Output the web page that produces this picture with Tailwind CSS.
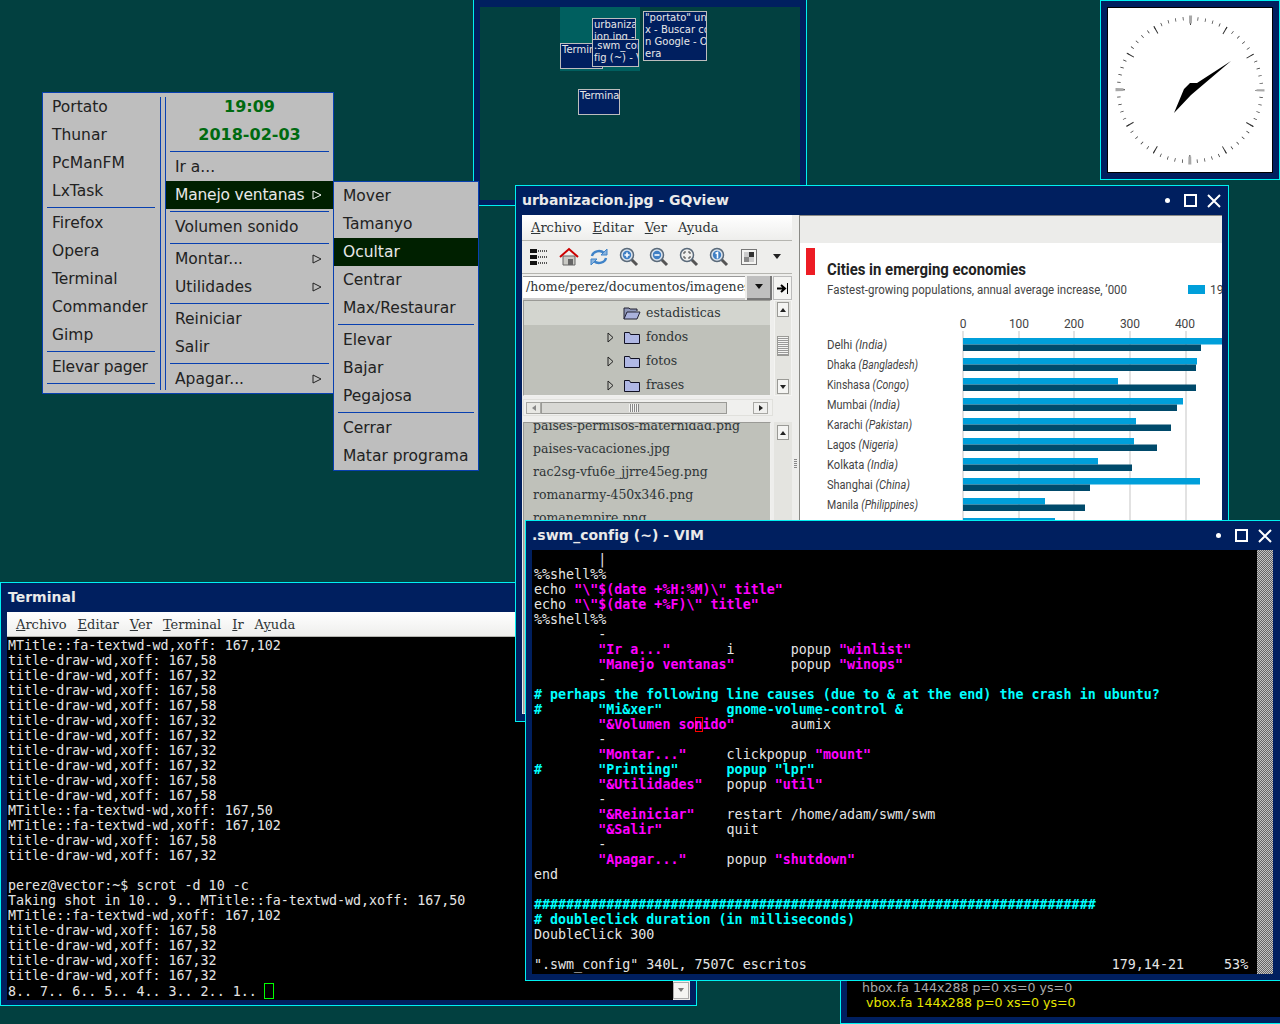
<!DOCTYPE html>
<html lang="es">
<head>
<meta charset="UTF-8">
<title>swm desktop</title>
<script src="https://cdn.jsdelivr.net/npm/@tailwindcss/browser@4"></script>
</head>
<body class="bg-[#024040]">
<div class="relative w-[1280px] h-[1024px] overflow-hidden font-['DejaVu_Sans',sans-serif]">

  <!-- pager -->
  <div class="absolute left-[473px] top-0 w-[334px] h-[206px] border-x border-b border-[#00f0f0] bg-[#001f5f] px-[6px] pt-[7px] pb-[5px]">
    <div class="relative w-full h-full bg-[#024040] text-[10px] leading-[12px] text-[#e8e8e8] whitespace-pre">
      <div class="absolute left-[80px] top-0 w-[80px] h-[64px] bg-[#005f5f]"></div>
      <div class="absolute left-[80px] top-[36px] w-[43px] h-[26px] border border-[#bdbdbd] bg-[#001f5f] overflow-hidden px-[1px]">Terminal</div>
      <div class="absolute left-[112px] top-[11px] w-[44px] h-[30px] border border-[#bdbdbd] bg-[#001f5f] overflow-hidden px-[1px]">urbanizac
ion.jpg -</div>
      <div class="absolute left-[112px] top-[32px] w-[47px] h-[28px] border border-[#bdbdbd] bg-[#001f5f] overflow-hidden px-[1px]">.swm_conf
fig (~) - VIM</div>
      <div class="absolute left-[163px] top-[4px] w-[64px] h-[50px] border border-[#bdbdbd] bg-[#001f5f] overflow-hidden px-[1px]">"portato" un
x - Buscar co
n Google - O
era</div>
      <div class="absolute left-[98px] top-[82px] w-[42px] h-[26px] border border-[#bdbdbd] bg-[#001f5f] overflow-hidden px-[1px]">Terminal</div>
    </div>
  </div>

  <!-- clock -->
  <div class="absolute left-[1100px] top-0 w-[180px] h-[180px] border border-[#00f0f0] bg-[#001f5f] p-[6px]">
    <div class="w-[166px] h-[166px] border border-black bg-white">
      <svg width="164" height="164" viewBox="1108 8 164 164">
        <g fill="none">
          <circle cx="1190" cy="90" r="71.5" stroke="#333" stroke-width="3.5" stroke-dasharray="0.7 6.787" stroke-dashoffset="0.35"/>
          <circle cx="1190" cy="90" r="69" stroke="#333" stroke-width="8" stroke-dasharray="1 35.128" stroke-dashoffset="0.5"/>
          <circle cx="1190" cy="90" r="70.5" stroke="#a8a8a8" stroke-width="8" stroke-dasharray="3 107.74" stroke-dashoffset="1.5"/>
        </g>
        <path d="M1231 61 L1197 83 L1190 83 L1184 89 L1174 113 L1191 95 Z" fill="#000"/>
      </svg>
    </div>
  </div>

  <!-- bottom right window -->
  <div class="absolute left-[840px] top-[960px] w-[460px] h-[64px] border border-[#00f0f0] bg-[#001f5f] pl-[6px] pb-[6px]">
    <div class="w-full h-full bg-black flex flex-col justify-end pb-[7px] pl-[15px] text-[12.6px] leading-[15px] whitespace-pre">
      <div class="text-[#a9a9a9]">hbox.fa 144x288 p=0 xs=0 ys=0</div>
      <div class="text-[#e6e600] pl-[4px]">vbox.fa 144x288 p=0 xs=0 ys=0</div>
    </div>
  </div>

  <!-- terminal -->
  <div class="absolute left-0 top-[582px] w-[697px] h-[424px] border border-[#00f0f0] bg-[#001f5f] px-[6px] pb-[5px] flex flex-col">
    <div class="h-[29px] flex items-center pl-[1px] text-[#eaeaea] text-[14px] font-bold shrink-0">Terminal</div>
    <div class="h-[25px] shrink-0 bg-gradient-to-b from-white to-[#eeeeec] border-b border-[#b5b5b0] flex items-center pl-[9px] pt-[1px] gap-[11px] text-[13px] text-[#2e3436] font-['DejaVu_Serif',serif]">
      <span><u>A</u>rchivo</span><span><u>E</u>ditar</span><span><u>V</u>er</span><span><u>T</u>erminal</span><span><u>I</u>r</span><span>A<u>y</u>uda</span>
    </div>
    <div class="flex-1 min-h-0 bg-black flex">
      <pre class="flex-1 pl-[1px] pt-[1px] font-['DejaVu_Sans_Mono',monospace] text-[13.33px] leading-[15px] text-[#e5e5e5] overflow-hidden">MTitle::fa-textwd-wd,xoff: 167,102
title-draw-wd,xoff: 167,58
title-draw-wd,xoff: 167,32
title-draw-wd,xoff: 167,58
title-draw-wd,xoff: 167,58
title-draw-wd,xoff: 167,32
title-draw-wd,xoff: 167,32
title-draw-wd,xoff: 167,32
title-draw-wd,xoff: 167,32
title-draw-wd,xoff: 167,58
title-draw-wd,xoff: 167,58
MTitle::fa-textwd-wd,xoff: 167,50
MTitle::fa-textwd-wd,xoff: 167,102
title-draw-wd,xoff: 167,58
title-draw-wd,xoff: 167,32

perez@vector:~$ scrot -d 10 -c
Taking shot in 10.. 9.. MTitle::fa-textwd-wd,xoff: 167,50
MTitle::fa-textwd-wd,xoff: 167,102
title-draw-wd,xoff: 167,58
title-draw-wd,xoff: 167,32
title-draw-wd,xoff: 167,32
title-draw-wd,xoff: 167,32
8.. 7.. 6.. 5.. 4.. 3.. 2.. 1.. <span class="inline-block w-[10px] h-[16px] -ml-[1px] align-[-3px] border border-[#00ff00]"></span></pre>
      <div class="w-[17px] bg-[#eeeeec] flex flex-col justify-end pb-[1px] pr-[1px]">
        <div class="h-[17px] border border-[#aaa] bg-[#f4f4f2] flex items-center justify-center"><svg width="6" height="5"><path d="M0 0H6L3 4Z" fill="#777"/></svg></div>
      </div>
    </div>
  </div>

  <!-- gqview -->
  <div class="absolute left-[515px] top-[185px] w-[714px] h-[537px] border border-[#00f0f0] bg-[#001f5f] px-[6px] pb-[7px] flex flex-col">
    <div class="h-[29px] shrink-0 flex items-center justify-between text-[#eaeaea]">
      <span class="text-[14px] font-bold">urbanizacion.jpg - GQview</span>
      <div class="flex items-center">
        <div class="w-[5px] h-[5px] rounded-full bg-white mr-[14px]"></div>
        <div class="w-[13px] h-[13px] border-2 border-white mr-[10px]"></div>
        <svg class="mr-[1px]" width="14" height="14"><path d="M1 1L13 13M13 1L1 13" stroke="#fff" stroke-width="2"/></svg>
      </div>
    </div>
    <div class="flex-1 min-h-0 bg-[#eeeeec] flex">
      <!-- left pane -->
      <div class="w-[270px] shrink-0 flex flex-col text-[#2e3436] font-['DejaVu_Serif',serif] text-[12.5px]">
        <div class="h-[26px] shrink-0 bg-gradient-to-b from-white to-[#eeeeec] border-b border-[#b5b5b0] flex items-center pl-[9px] gap-[11px] text-[13px]">
          <span><u>A</u>rchivo</span><span><u>E</u>ditar</span><span><u>V</u>er</span><span>A<u>y</u>uda</span>
        </div>
        <div class="h-[33px] shrink-0 border-b border-[#b5b5b0] flex items-center pl-[2px]">
          <div class="w-[30px] flex justify-center"><svg width="20" height="20" viewBox="0 0 20 20"><path d="M1 2h7v4H1zM1 8h7v4H1zM1 14h7v4H1z" fill="#111"/><path d="M9 4h9M9 10h9M9 16h9" stroke="#555" stroke-dasharray="1 1" stroke-width="2" /></svg></div>
          <div class="w-[30px] flex justify-center"><svg width="20" height="20" viewBox="0 0 20 20"><path d="M4 9h12v9H4z" fill="#c9c9c4" stroke="#666"/><path d="M9 12h5v6H9z" fill="#666"/><path d="M1 10L10 2L19 10" fill="none" stroke="#cc0000" stroke-width="2"/></svg></div>
          <div class="w-[30px] flex justify-center"><svg width="20" height="20" viewBox="0 0 20 20" fill="none" stroke="#3f83c8" stroke-width="2.4"><path d="M3 9a7 6 0 0 1 12-3"/><path d="M17 11a7 6 0 0 1-12 3"/><path d="M18 2v6h-6z M2 18v-6h6z" fill="#8ab4de" stroke-width="1"/></svg></div>
          <div class="w-[30px] flex justify-center"><svg width="20" height="20" viewBox="0 0 20 20"><path d="M12 12l6 6" stroke="#555" stroke-width="3"/><circle cx="8" cy="8" r="6.5" fill="#dbe4ee" stroke="#5a6a7a" stroke-width="1.5"/><circle cx="8" cy="8" r="4.2" fill="#3f7fc4"/><path d="M5.5 8h5M8 5.5v5" stroke="#fff" stroke-width="1.6"/></svg></div>
          <div class="w-[30px] flex justify-center"><svg width="20" height="20" viewBox="0 0 20 20"><path d="M12 12l6 6" stroke="#555" stroke-width="3"/><circle cx="8" cy="8" r="6.5" fill="#dbe4ee" stroke="#5a6a7a" stroke-width="1.5"/><circle cx="8" cy="8" r="4.2" fill="#3f7fc4"/><path d="M5.5 8h5" stroke="#fff" stroke-width="1.6"/></svg></div>
          <div class="w-[30px] flex justify-center"><svg width="20" height="20" viewBox="0 0 20 20"><path d="M12 12l6 6" stroke="#555" stroke-width="3"/><circle cx="8" cy="8" r="6.5" fill="#f0f0ee" stroke="#5a6a7a" stroke-width="1.5"/><path d="M5 7V5h2M9 5h2v2M11 9v2H9M7 11H5V9" fill="none" stroke="#444"/></svg></div>
          <div class="w-[30px] flex justify-center"><svg width="20" height="20" viewBox="0 0 20 20"><path d="M12 12l6 6" stroke="#555" stroke-width="3"/><circle cx="8" cy="8" r="6.5" fill="#dbe4ee" stroke="#5a6a7a" stroke-width="1.5"/><circle cx="8" cy="8" r="4.2" fill="#3f7fc4"/><path d="M6.5 6.5L8.5 5.5v6" fill="none" stroke="#fff" stroke-width="1.6"/></svg></div>
          <div class="w-[30px] flex justify-center"><svg width="16" height="16" viewBox="0 0 16 16"><rect x="0.5" y="0.5" width="15" height="15" fill="#f4f4f2" stroke="#777"/><path d="M8 3h5v5H8z" fill="#333"/><path d="M3 8h5v5H3z" fill="#888"/><path d="M3 3h5v5H3zM8 8h5v5H8z" fill="#ccc"/></svg></div>
          <div class="w-[26px] flex justify-center"><svg width="10" height="6"><path d="M1 0H9L5 5Z" fill="#222"/></svg></div>
        </div>
        <!-- path entry -->
        <div class="h-[26px] shrink-0 flex pl-[1px] pt-[2px] gap-[2px]">
          <div class="w-[222px] bg-white border-t border-[#999] border-b-2 border-b-[#ccc] pl-[3px] overflow-hidden whitespace-pre leading-[19px]">/home/perez/documentos/imagenes/</div>
          <div class="w-[25px] bg-[#bfbfbf] border-r-2 border-b-2 border-[#777] flex items-center justify-center"><svg width="10" height="6"><path d="M1 0H9L5 5Z" fill="#111"/></svg></div>
          <div class="w-[19px] -ml-[1px] bg-[#f4f4f2] border border-[#bbb] flex items-center justify-center"><svg width="12" height="11"><path d="M0 5.5H7M4 2L8 5.5L4 9" fill="none" stroke="#000" stroke-width="2"/><path d="M10.5 0V11" stroke="#000"/></svg></div>
        </div>
        <!-- tree -->
        <div class="h-[96px] shrink-0 flex pl-[1px]">
          <div class="w-[248px] border border-[#f0f0ee] border-l-[#9a9a96] border-t-[#9a9a96] bg-[#bfc1ba] overflow-hidden">
            <div class="h-[24px] bg-[#d3d5cf] flex items-center pl-[99px] gap-[5px]">
              <svg width="18" height="14" viewBox="0 0 18 14"><path d="M1 13V2h5l1 1h7v2" fill="#8f97b8" stroke="#223"/><path d="M1 13L4 6H17L14 13Z" fill="#aab2dc" stroke="#223"/></svg><span>estadisticas</span>
            </div>
            <div class="h-[24px] flex items-center pl-[83px] gap-[10px]">
              <svg width="7" height="11"><path d="M1 1L6 5.5L1 10Z" fill="none" stroke="#222"/></svg>
              <svg width="16" height="13" viewBox="0 0 16 13"><path d="M.5 12.5V1.5h5l1 2h9v9z" fill="#b0b8e4" stroke="#112"/></svg><span class="-ml-[4px]">fondos</span>
            </div>
            <div class="h-[24px] flex items-center pl-[83px] gap-[10px]">
              <svg width="7" height="11"><path d="M1 1L6 5.5L1 10Z" fill="none" stroke="#222"/></svg>
              <svg width="16" height="13" viewBox="0 0 16 13"><path d="M.5 12.5V1.5h5l1 2h9v9z" fill="#b0b8e4" stroke="#112"/></svg><span class="-ml-[4px]">fotos</span>
            </div>
            <div class="h-[24px] flex items-center pl-[83px] gap-[10px]">
              <svg width="7" height="11"><path d="M1 1L6 5.5L1 10Z" fill="none" stroke="#222"/></svg>
              <svg width="16" height="13" viewBox="0 0 16 13"><path d="M.5 12.5V1.5h5l1 2h9v9z" fill="#b0b8e4" stroke="#112"/></svg><span class="-ml-[4px]">frases</span>
            </div>
          </div>
          <div class="ml-[3px] w-[18px] bg-[#e4e4e0] border border-[#f4f4f2] flex flex-col items-center justify-between py-[1px] relative">
            <div class="w-[12px] h-[15px] border border-[#9a9a96] bg-[#f4f4f2] flex items-center justify-center"><svg width="6" height="4"><path d="M0 4H6L3 0Z" fill="#222"/></svg></div>
            <div class="absolute top-[35px] w-[12px] h-[20px] border border-[#9a9a96] bg-[repeating-linear-gradient(#f4f4f2_0_1px,#999_1px_2px)]"></div>
            <div class="w-[12px] h-[15px] border border-[#9a9a96] bg-[#f4f4f2] flex items-center justify-center"><svg width="6" height="4"><path d="M0 0H6L3 4Z" fill="#222"/></svg></div>
          </div>
        </div>
        <!-- horizontal scrollbar -->
        <div class="h-[23px] shrink-0 pl-[1px] pt-[3px]">
          <div class="w-[250px] h-[17px] bg-[#f0f0ee] border border-[#e0e0dc] flex items-center px-[2px] relative">
            <div class="w-[15px] h-[12px] border border-[#a8a8a4] bg-[#e8e8e4] flex items-center justify-center"><svg width="4" height="6"><path d="M4 0V6L0 3Z" fill="#888"/></svg></div>
            <div class="w-[186px] h-[12px] border border-[#9a9a96] bg-[#d8d8d4] flex items-center justify-center"><div class="w-[10px] h-[8px] bg-[repeating-linear-gradient(90deg,#f4f4f2_0_1px,#888_1px_2px)]"></div></div>
            <div class="ml-auto w-[15px] h-[12px] border border-[#a8a8a4] bg-[#f0f0ee] flex items-center justify-center mr-[2px]"><svg width="4" height="6"><path d="M0 0V6L4 3Z" fill="#222"/></svg></div>
          </div>
        </div>
        <!-- file list -->
        <div class="flex-1 min-h-0 flex pl-[1px] pt-[3px]">
          <div class="w-[248px] border border-[#f0f0ee] border-l-[#9a9a96] border-t-[#9a9a96] bg-[#bfc1ba] overflow-hidden pl-[9px] leading-[23px]">
            <div class="-mt-[9px]">paises-permisos-maternidad.png</div>
            <div>paises-vacaciones.jpg</div>
            <div>rac2sg-vfu6e_jjrre45eg.png</div>
            <div>romanarmy-450x346.png</div>
            <div>romanempire.png</div>
          </div>
          <div class="ml-[3px] w-[18px] bg-[#e4e4e0] flex flex-col items-center pt-[3px]">
            <div class="w-[12px] h-[15px] border border-[#9a9a96] bg-[#f4f4f2] flex items-center justify-center"><svg width="6" height="4"><path d="M0 4H6L3 0Z" fill="#222"/></svg></div>
          </div>
        </div>
      </div>
      <!-- pane divider -->
      <div class="w-[7px] shrink-0 flex items-center justify-center pb-[2px]"><div class="w-[3px] h-[10px] bg-[repeating-linear-gradient(#888_0_1px,#eeeeec_1px_2px)]"></div></div>
      <!-- image -->
      <div class="flex-1 min-w-0 border-l border-t border-[#8a8a86] bg-white overflow-hidden">
        <svg width="422" height="306" viewBox="800 216 422 306" class="block font-['Roboto',sans-serif]">
          <rect x="800" y="216" width="422" height="27" fill="#ececea"/>
          <rect x="806" y="248" width="9" height="27" fill="#ed1c24"/>
          <text x="827" y="275" font-size="16" font-weight="700" fill="#222" textLength="199" lengthAdjust="spacingAndGlyphs">Cities in emerging economies</text>
          <text x="827" y="294" font-size="12.5" fill="#444" textLength="300" lengthAdjust="spacingAndGlyphs">Fastest-growing populations, annual average increase, ’000</text>
          <rect x="1188" y="285" width="17" height="9" fill="#009fda"/>
          <text x="1210" y="294" font-size="12" fill="#444">19</text>
          <g font-size="12" fill="#444" text-anchor="middle">
            <text x="963" y="328">0</text><text x="1019" y="328">100</text><text x="1074" y="328">200</text><text x="1130" y="328">300</text><text x="1185" y="328">400</text>
          </g>
          <g stroke="#cfcfcf" stroke-width="1.2">
            <path d="M963 331V522M1019 331V522M1074 331V522M1130 331V522M1186 331V522"/>
          </g>
          <g fill="#009fda">
            <rect x="963" y="338" width="259" height="6.5"/><rect x="963" y="358" width="234" height="6.5"/><rect x="963" y="378" width="155" height="6.5"/><rect x="963" y="398" width="220" height="6.5"/><rect x="963" y="418" width="173" height="6.5"/><rect x="963" y="438" width="171" height="6.5"/><rect x="963" y="458" width="135" height="6.5"/><rect x="963" y="478" width="237" height="6.5"/><rect x="963" y="498" width="82" height="6.5"/><rect x="963" y="518" width="92" height="6.5"/>
          </g>
          <g fill="#004a6b">
            <rect x="963" y="344.5" width="238" height="6.5"/><rect x="963" y="364.5" width="233" height="6.5"/><rect x="963" y="384.5" width="233" height="6.5"/><rect x="963" y="404.5" width="214" height="6.5"/><rect x="963" y="424.5" width="208" height="6.5"/><rect x="963" y="444.5" width="194" height="6.5"/><rect x="963" y="464.5" width="169" height="6.5"/><rect x="963" y="484.5" width="127" height="6.5"/><rect x="963" y="504.5" width="122" height="6.5"/>
          </g>
          <g font-size="12" fill="#444">
            <text x="827" y="349" textLength="60" lengthAdjust="spacingAndGlyphs">Delhi <tspan font-style="italic">(India)</tspan></text>
            <text x="827" y="369" textLength="91" lengthAdjust="spacingAndGlyphs">Dhaka <tspan font-style="italic">(Bangladesh)</tspan></text>
            <text x="827" y="389" textLength="82" lengthAdjust="spacingAndGlyphs">Kinshasa <tspan font-style="italic">(Congo)</tspan></text>
            <text x="827" y="409" textLength="73" lengthAdjust="spacingAndGlyphs">Mumbai <tspan font-style="italic">(India)</tspan></text>
            <text x="827" y="429" textLength="85" lengthAdjust="spacingAndGlyphs">Karachi <tspan font-style="italic">(Pakistan)</tspan></text>
            <text x="827" y="449" textLength="71" lengthAdjust="spacingAndGlyphs">Lagos <tspan font-style="italic">(Nigeria)</tspan></text>
            <text x="827" y="469" textLength="71" lengthAdjust="spacingAndGlyphs">Kolkata <tspan font-style="italic">(India)</tspan></text>
            <text x="827" y="489" textLength="83" lengthAdjust="spacingAndGlyphs">Shanghai <tspan font-style="italic">(China)</tspan></text>
            <text x="827" y="509" textLength="91" lengthAdjust="spacingAndGlyphs">Manila <tspan font-style="italic">(Philippines)</tspan></text>
          </g>
        </svg>
      </div>
    </div>
  </div>

  <!-- vim -->
  <div class="absolute left-[525px] top-[520px] w-[760px] h-[461px] border border-[#00f0f0] bg-[#001f5f] pl-[6px] pr-[6px] pb-[6px] flex flex-col">
    <div class="h-[29px] shrink-0 flex items-center justify-between text-[#eaeaea] w-[741px]">
      <span class="text-[14px] font-bold">.swm_config (~) - VIM</span>
      <div class="flex items-center">
        <div class="w-[5px] h-[5px] rounded-full bg-white mr-[14px]"></div>
        <div class="w-[13px] h-[13px] border-2 border-white mr-[10px]"></div>
        <svg class="mr-[1px]" width="14" height="14"><path d="M1 1L13 13M13 1L1 13" stroke="#fff" stroke-width="2"/></svg>
      </div>
    </div>
    <div class="flex-1 min-h-0 flex w-[741px]">
      <pre class="w-[725px] bg-black pl-[2px] pt-[2px] overflow-hidden font-['DejaVu_Sans_Mono',monospace] text-[13.33px] leading-[15px] text-[#e5e5e5] [&_b]:text-[#ff00ff] [&_strong]:text-[#00ffff]">        |
%%shell%%
echo <b>"\"$(date +%H:%M)\" title"</b>
echo <b>"\"$(date +%F)\" title"</b>
%%shell%%
        -
        <b>"Ir a..."</b>       i       popup <b>"winlist"</b>
        <b>"Manejo ventanas"</b>       popup <b>"winops"</b>
        -
<strong># perhaps the following line causes (due to &amp; at the end) the crash in ubuntu?</strong>
<strong>#       "Mi&amp;xer"        gnome-volume-control &amp;</strong>
        <b>"&amp;Volumen so<span class="inline-block w-[8px] h-[15px] align-top shadow-[inset_0_0_0_1px_#ff0000]">n</span>ido"</b>       aumix
        -
        <b>"Montar..."</b>     clickpopup <b>"mount"</b>
<strong>#       "Printing"      popup "lpr"</strong>
        <b>"&amp;Utilidades"</b>   popup <b>"util"</b>
        -
        <b>"&amp;Reiniciar"</b>    restart /home/adam/swm/swm
        <b>"&amp;Salir"</b>        quit
        -
        <b>"Apagar..."</b>     popup <b>"shutdown"</b>
end

<strong>######################################################################</strong>
<strong># doubleclick duration (in milliseconds)</strong>
DoubleClick 300

".swm_config" 340L, 7507C escritos                                      179,14-21     53%</pre>
      <div class="w-[16px] bg-[repeating-conic-gradient(#c4c4c4_0_25%,#666_0_50%)] bg-[length:2px_2px]"></div>
    </div>
  </div>

  <!-- root menu -->
  <div class="absolute left-[42px] top-[92px] w-[292px] h-[302px] border border-[#0840b0] bg-[#bebebe] flex text-[15.5px] text-[#222] pb-[8px] whitespace-nowrap">
    <div class="w-[117px] shrink-0">
      <div class="h-[28px] pl-[9px] pt-[1px] flex items-center">Portato</div>
      <div class="h-[28px] pl-[9px] pt-[1px] flex items-center">Thunar</div>
      <div class="h-[28px] pl-[9px] pt-[1px] flex items-center">PcManFM</div>
      <div class="h-[28px] pl-[9px] pt-[1px] flex items-center">LxTask</div>
      <div class="h-[4px] pt-[2px] mx-[4px] w-[108px]"><div class="h-px bg-[#0840b0]"></div></div>
      <div class="h-[28px] pl-[9px] pt-[1px] flex items-center">Firefox</div>
      <div class="h-[28px] pl-[9px] pt-[1px] flex items-center">Opera</div>
      <div class="h-[28px] pl-[9px] pt-[1px] flex items-center">Terminal</div>
      <div class="h-[28px] pl-[9px] pt-[1px] flex items-center">Commander</div>
      <div class="h-[28px] pl-[9px] pt-[1px] flex items-center">Gimp</div>
      <div class="h-[4px] pt-[2px] mx-[4px] w-[108px]"><div class="h-px bg-[#0840b0]"></div></div>
      <div class="h-[28px] pl-[9px] pt-[1px] flex items-center tracking-[-0.25px]">Elevar pager</div>
      <div class="h-[4px] pt-[2px] mx-[4px] w-[108px]"><div class="h-px bg-[#0840b0]"></div></div>
    </div>
    <div class="w-[6px] shrink-0 mt-[4px] -mb-[4px] border-x border-[#0840b0] ml-0 h-[293px]"></div>
    <div class="flex-1 min-w-0">
      <div class="h-[28px] flex items-center justify-center font-bold text-[16px] text-[#006a10]">19:09</div>
      <div class="h-[28px] flex items-center justify-center font-bold text-[16px] text-[#006a10]">2018-02-03</div>
      <div class="h-[4px] pt-[2px] mx-[4px]"><div class="h-px bg-[#0840b0]"></div></div>
      <div class="h-[28px] pl-[9px] pt-[1px] flex items-center">Ir a...</div>
      <div class="h-[28px] pl-[9px] flex items-center justify-between bg-[#002000] text-[#e8e8e8] tracking-[-0.2px]"><span class="pt-[1px]">Manejo ventanas</span><svg class="mr-[11px]" width="10" height="10"><path d="M1 1L9 5L1 9Z" fill="none" stroke="#fff"/></svg></div>
      <div class="h-[4px] pt-[2px] mx-[4px]"><div class="h-px bg-[#0840b0]"></div></div>
      <div class="h-[28px] pl-[9px] pt-[1px] flex items-center">Volumen sonido</div>
      <div class="h-[4px] pt-[2px] mx-[4px]"><div class="h-px bg-[#0840b0]"></div></div>
      <div class="h-[28px] pl-[9px] flex items-center justify-between"><span class="pt-[1px]">Montar...</span><svg class="mr-[11px]" width="10" height="10"><path d="M1 1L9 5L1 9Z" fill="none" stroke="#222"/></svg></div>
      <div class="h-[28px] pl-[9px] flex items-center justify-between"><span class="pt-[1px]">Utilidades</span><svg class="mr-[11px]" width="10" height="10"><path d="M1 1L9 5L1 9Z" fill="none" stroke="#222"/></svg></div>
      <div class="h-[4px] pt-[2px] mx-[4px]"><div class="h-px bg-[#0840b0]"></div></div>
      <div class="h-[28px] pl-[9px] pt-[1px] flex items-center">Reiniciar</div>
      <div class="h-[28px] pl-[9px] pt-[1px] flex items-center">Salir</div>
      <div class="h-[4px] pt-[2px] mx-[4px]"><div class="h-px bg-[#0840b0]"></div></div>
      <div class="h-[28px] pl-[9px] flex items-center justify-between"><span class="pt-[1px]">Apagar...</span><svg class="mr-[11px]" width="10" height="10"><path d="M1 1L9 5L1 9Z" fill="none" stroke="#222"/></svg></div>
    </div>
  </div>

  <!-- submenu -->
  <div class="absolute left-[333px] top-[181px] w-[146px] h-[290px] border border-[#0840b0] bg-[#bebebe] text-[15.5px] text-[#222] whitespace-nowrap">
    <div class="h-[28px] pl-[9px] pt-[1px] flex items-center">Mover</div>
    <div class="h-[28px] pl-[9px] pt-[1px] flex items-center">Tamanyo</div>
    <div class="h-[28px] pl-[9px] pt-[1px] flex items-center bg-[#002000] text-[#e8e8e8]">Ocultar</div>
    <div class="h-[28px] pl-[9px] pt-[1px] flex items-center">Centrar</div>
    <div class="h-[28px] pl-[9px] pt-[1px] flex items-center">Max/Restaurar</div>
    <div class="h-[4px] pt-[2px] mx-[4px]"><div class="h-px bg-[#0840b0]"></div></div>
    <div class="h-[28px] pl-[9px] pt-[1px] flex items-center">Elevar</div>
    <div class="h-[28px] pl-[9px] pt-[1px] flex items-center">Bajar</div>
    <div class="h-[28px] pl-[9px] pt-[1px] flex items-center">Pegajosa</div>
    <div class="h-[4px] pt-[2px] mx-[4px]"><div class="h-px bg-[#0840b0]"></div></div>
    <div class="h-[28px] pl-[9px] pt-[1px] flex items-center">Cerrar</div>
    <div class="h-[28px] pl-[9px] pt-[1px] flex items-center">Matar programa</div>
  </div>
</div>
</body>
</html>
